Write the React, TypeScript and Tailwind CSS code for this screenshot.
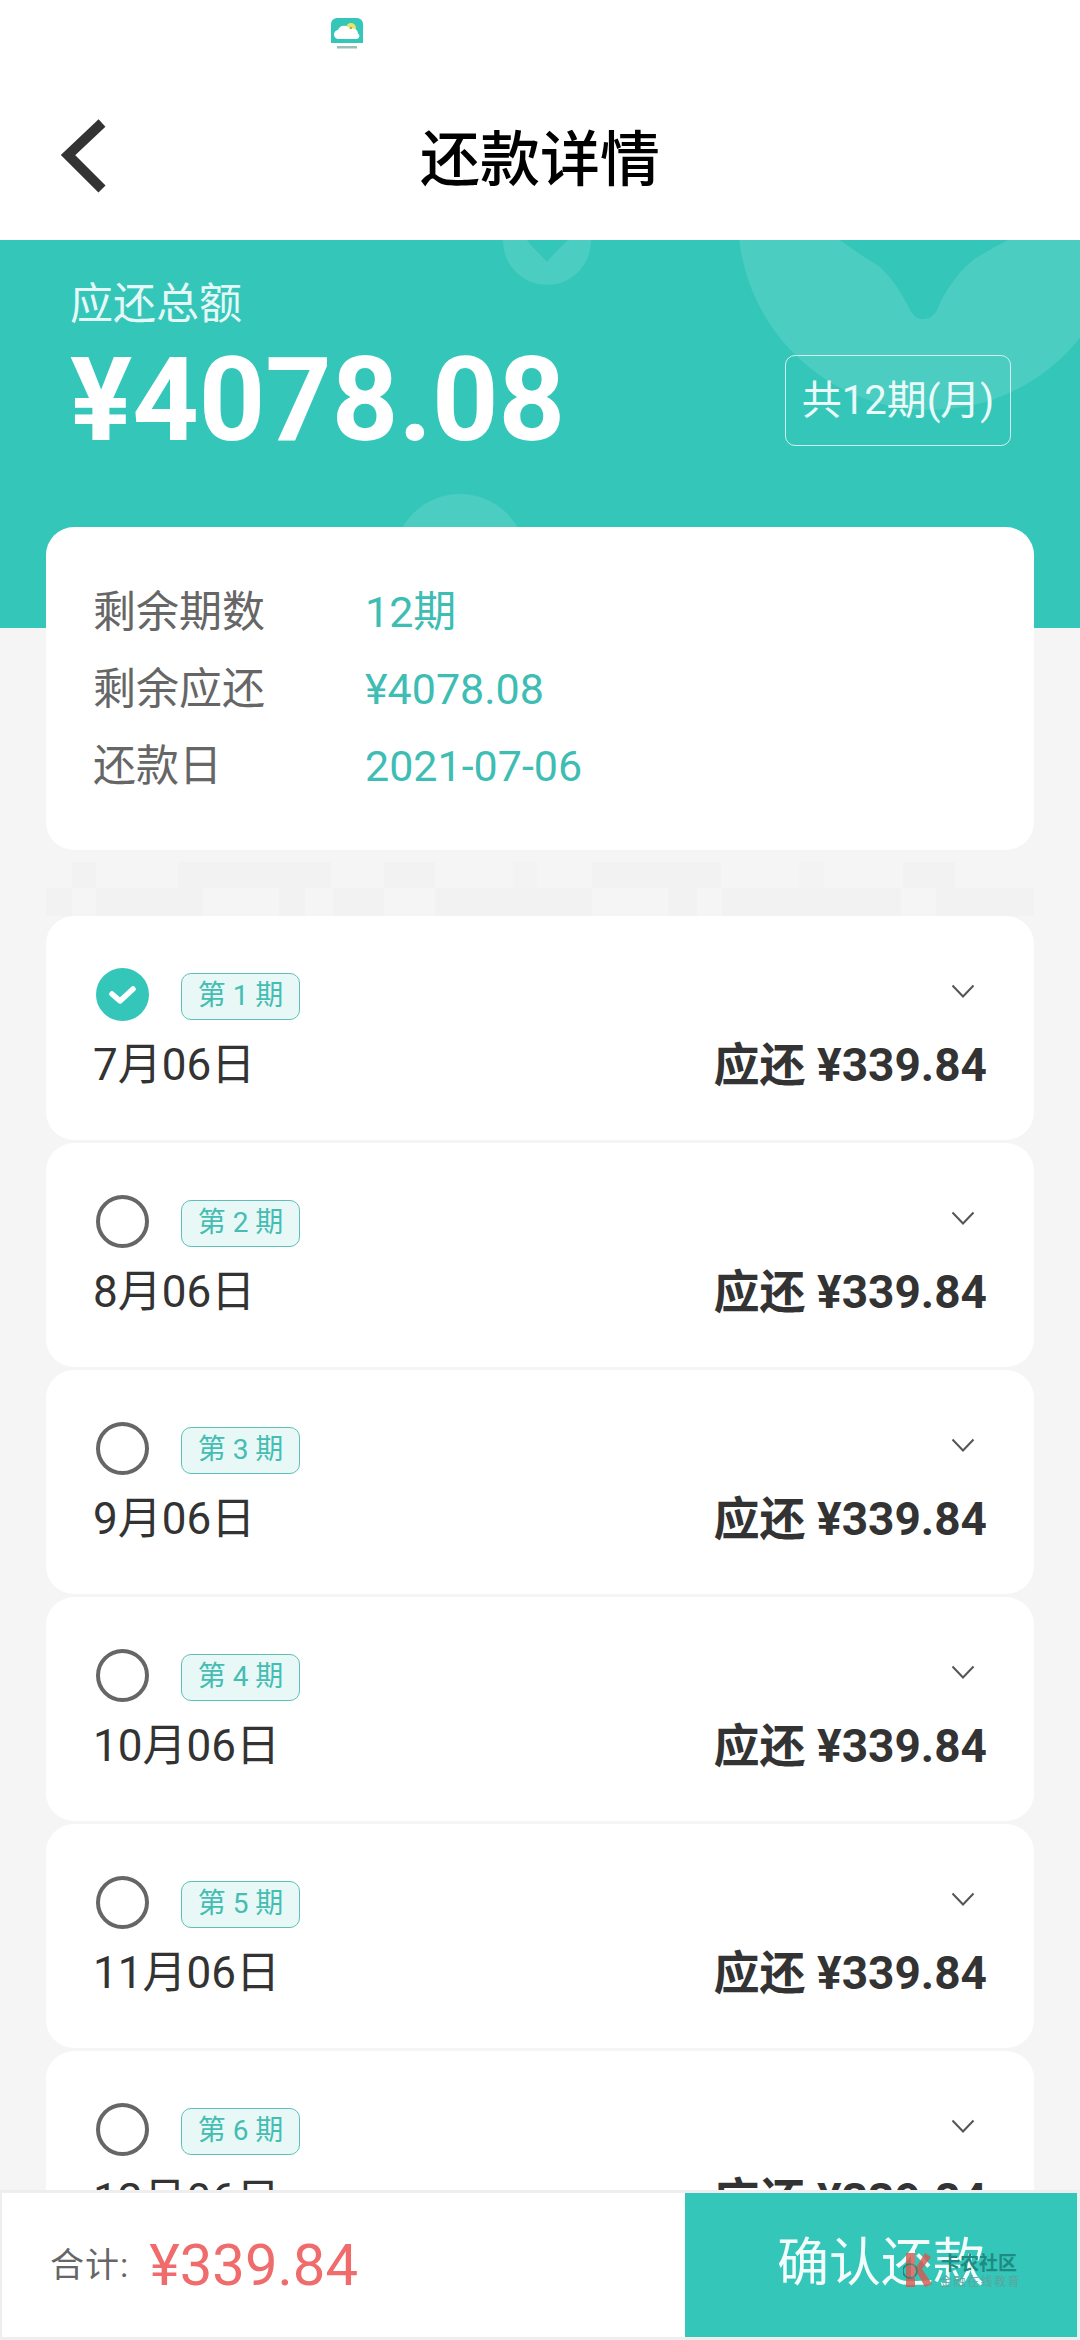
const FONT = "font-['Roboto','Noto_Sans_CJK_SC',sans-serif]";

const periods = [
  { n: 1, date: "7月06日", checked: true },
  { n: 2, date: "8月06日", checked: false },
  { n: 3, date: "9月06日", checked: false },
  { n: 4, date: "10月06日", checked: false },
  { n: 5, date: "11月06日", checked: false },
  { n: 6, date: "12月06日", checked: false },
];

function Logo() {
  return (
    <svg width="34" height="34" viewBox="0 0 34 34" className="block">
      <path d="M6 0h20a6 6 0 0 1 6 6v19H0V6a6 6 0 0 1 6-6z" fill="#35c6ba" />
      <circle cx="20" cy="10" r="5" fill="#e2e66f" />
      <path d="M21 10h-2M20 9v2" stroke="#8a9a3c" strokeWidth="1" />
      <path d="M8 21a4.5 4.5 0 0 1-1-9 6.5 6.5 0 0 1 12-0.5 5 5 0 0 1 8 4 3 3 0 0 1-1 5.500z" fill="#fff" />
      <rect x="6" y="28" width="20" height="2.500" fill="#9dbdb7" />
    </svg>
  );
}

function Row({ n, date, checked }: { n: number; date: string; checked: boolean }) {
  return (
    <div className="h-[224px] rounded-[28px] bg-white pt-[52px] pl-[47px] pr-[47px]">
      <div className="flex h-[53px] items-center">
        {checked ? (
          <svg width="53" height="53" viewBox="0 0 53 53" className="ml-[3px] block">
            <circle cx="26.5" cy="26.5" r="26.5" fill="#35c6ba" />
            <path d="M16 26l8 7 13-12" fill="none" stroke="#fff" strokeWidth="5.500" strokeLinecap="round" strokeLinejoin="round" />
          </svg>
        ) : (
          <div className="ml-[3px] h-[53px] w-[53px] rounded-full border-[4px] border-[#666]" />
        )}
        <div className="ml-[32px] mt-[3px] flex h-[47px] w-[119px] items-center justify-center rounded-[10px] border border-[#5fc0b8] bg-[#e8f8f6] text-[28px] text-[#45bdb3]">
          第 {n} 期
        </div>
        <svg width="24" height="14" viewBox="0 0 24 14" className="mb-[8px] ml-auto mr-[12px] block">
          <path d="M1.500 1.500L12 12.500 22.500 1.500" fill="none" stroke="#555" strokeWidth="2" />
        </svg>
      </div>
      <div className="mt-[14px] flex items-center justify-between text-[#333]">
        <span className="text-[44px] leading-[60px]">{date}</span>
        <span className="text-[46px] leading-[60px] font-bold">应还 ¥339.84</span>
      </div>
    </div>
  );
}

function Info({ label, value }: { label: string; value: string }) {
  return (
    <div className="flex h-[77px] items-center text-[43px]">
      <span className="w-[272px] text-[#666]">{label}</span>
      <span className="text-[#3dbdb3]">{value}</span>
    </div>
  );
}

export default function App() {
  return (
    <div className={`relative h-[2340px] w-[1080px] overflow-hidden bg-[#f5f5f5] ${FONT}`}>
      <div className="h-[240px] bg-white">
        <div className="flex h-[60px] items-start pl-[331px] pt-[18px]">
          <Logo />
        </div>
        <div className="relative flex h-[195px] items-center justify-center pt-[6px]">
          <svg width="50" height="76" viewBox="0 0 50 76" className="absolute left-[60px] top-[58px]">
            <path d="M42 5L8 37l34 34" fill="none" stroke="#333" strokeWidth="10" />
          </svg>
          <span className="text-[60px] leading-none font-medium text-black">还款详情</span>
        </div>
      </div>

      <div className="relative h-[388px] overflow-hidden bg-[#35c6ba] pl-[70px] text-white">
        <svg width="1080" height="388" viewBox="0 0 1080 388" className="absolute left-0 top-0">
          <circle cx="547" cy="1" r="44" fill="#4bcdc2" />
          <path d="M527 0C532 8 541 14 547 22C553 14 560 8 568 0Z" fill="#35c6ba" />
          <circle cx="930" cy="-22" r="192" fill="#4bcdc2" />
          <path
            d="M840 0C853 10 866 18 880 27C892 38 903 55 910 70C914 77 918 79 923 79C928 79 933 77 937 70C943 55 955 35 973 20C985 12 997 6 1008 0Z"
            fill="#35c6ba"
          />
          <circle cx="460" cy="320" r="66" fill="#4bcdc2" />
        </svg>
        <div className="relative pt-[40px] text-[43px] leading-[48px] text-[#e6f8f6]">应还总额</div>
        <div className="relative mt-[7px] flex items-center">
          <span className="text-[116px] leading-[130px] font-bold">¥4078.08</span>
          <div className="absolute left-[715px] top-[20px] flex h-[91px] w-[226px] items-center justify-center rounded-[10px] border border-[#d0f2ee] text-[40px] text-[#e9faf8]">
            共12期(月)
          </div>
        </div>
      </div>

      <div className="relative mx-[46px] -mt-[101px] h-[323px] rounded-[28px] bg-white pl-[47px] pt-[47px]">
        <Info label="剩余期数" value="12期" />
        <Info label="剩余应还" value="¥4078.08" />
        <Info label="还款日" value="2021-07-06" />
      </div>

      <div className="mx-[46px] mt-[12px] h-[54px]">
        <div className="flex h-[26px]">
          <div className="ml-[26px] w-[24px] bg-[#f2f2f2]" />
          <div className="ml-[82px] w-[153px] bg-[#f2f2f2]" />
          <div className="ml-[53px] w-[51px] bg-[#f2f2f2]" />
          <div className="ml-[78px] w-[24px] bg-[#f3f3f3]" />
          <div className="ml-[55px] w-[129px] bg-[#f2f2f2]" />
          <div className="ml-[78px] w-[25px] bg-[#f3f3f3]" />
          <div className="ml-[79px] w-[52px] bg-[#f2f2f2]" />
        </div>
        <div className="flex h-[28px] bg-[#f2f2f2]">
          <div className="ml-[26px] w-[24px] bg-[#f5f5f5]" />
          <div className="ml-[107px] w-[76px] bg-[#f5f5f5]" />
          <div className="ml-[26px] w-[28px] bg-[#f5f5f5]" />
          <div className="ml-[51px] w-[51px] bg-[#f5f5f5]" />
          <div className="ml-[157px] w-[76px] bg-[#f5f5f5]" />
          <div className="ml-[29px] w-[25px] bg-[#f5f5f5]" />
          <div className="ml-[179px] w-[35px] bg-[#f5f5f5]" />
        </div>
      </div>

      <div className="mx-[46px] flex flex-col gap-[3px]">
        {periods.map((p) => (
          <Row key={p.n} {...p} />
        ))}
      </div>

      <div className="absolute bottom-0 left-0 flex h-[150px] w-[1080px] border-t-[3px] border-b-[3px] border-l-[2px] border-r-[3px] border-t-[#eeeeee] border-b-[#eeeeee] border-l-[#eeeeee] border-r-[#e4f6f4] bg-white">
        <div className="flex flex-1 items-center pl-[48px]">
          <span className="text-[34px] tracking-[1px] text-[#666]">合计:</span>
          <span className="ml-[20px] text-[58px] leading-none text-[#f06c6c]">¥339.84</span>
        </div>
        <div className="relative flex w-[392px] items-center justify-center bg-[#35c6ba] pb-[2px] text-[52px] text-[#f2fcfb]">
          <span>确认还款</span>
          <svg width="30" height="36" viewBox="0 0 30 36" className="absolute left-[218px] top-[59px] opacity-80">
            <path d="M3 1h9v34H3zM12 17L22 1l6 4-9 12 10 15-7 3z" fill="#d9584f" />
            <circle cx="7" cy="19" r="7" fill="none" stroke="#2a6e68" strokeWidth="1.500" />
          </svg>
          <div className="absolute left-[256px] top-[60px] text-[19px] leading-[22px] font-bold text-[#1f8a80]">卡农社区</div>
          <div className="absolute left-[255px] top-[82px] text-[12px] leading-[14px] tracking-[1.500px] text-[#5aa59d]">金融在线教育</div>
        </div>
      </div>
    </div>
  );
}
